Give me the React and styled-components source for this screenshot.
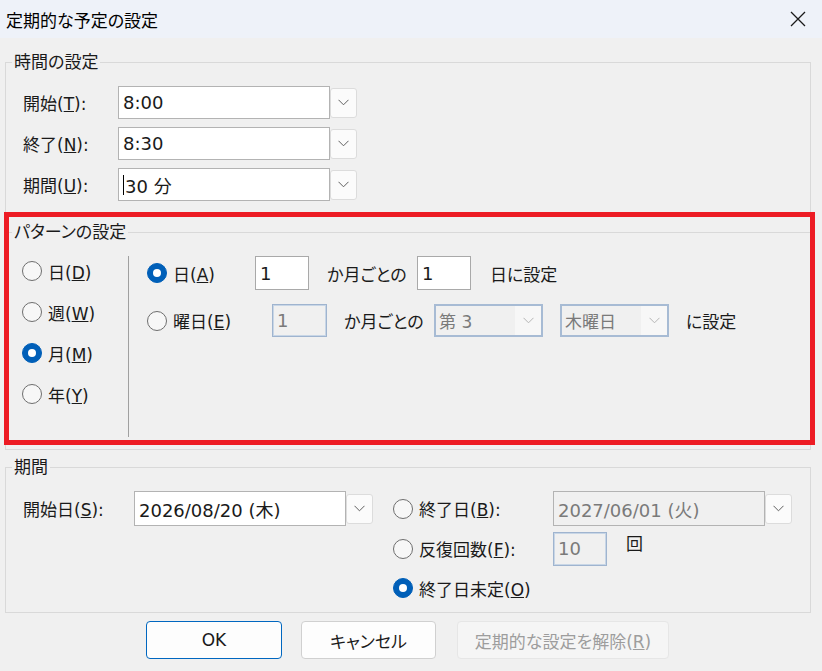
import React from "react"
import styled, { createGlobalStyle } from "styled-components"

const FONT = `"DejaVu Sans", "Noto Sans CJK JP", sans-serif`

const GlobalStyle = createGlobalStyle`
	html, body {
		margin: 0;
		padding: 0;
		background: #f0f0f0;
	}
	body {
		font-family: ${FONT};
		font-size: 17px;
		color: #1a1a1a;
		font-feature-settings: "palt";
	}
	* {
		box-sizing: border-box;
	}
`

function Chevron({ color = "#5f5f5f" }) {
	return (
		<svg width="11" height="7" viewBox="0 0 11 7">
			<polyline points="0.5,0.8 5.5,5.8 10.5,0.8" fill="none" stroke={color} strokeWidth="1" />
		</svg>
	)
}

function Radio({ checked, children, width }) {
	return (
		<RadioLabel $w={width}>
			<RadioDot $checked={checked} />
			<span>{children}</span>
		</RadioLabel>
	)
}

export default function App() {
	return (
		<>
			<GlobalStyle />
			<Dialog>
				<TitleBar>
					<span>定期的な予定の設定</span>
					<svg width="16" height="16" viewBox="0 0 16 16">
						<path d="M1 1 L15 15 M15 1 L1 15" stroke="#1a1a1a" strokeWidth="1.3" />
					</svg>
				</TitleBar>

				<Body>
					<GroupBox $top={14}>
						<Legend>時間の設定</Legend>
						<TimeRows>
							<FieldRow>
								<FieldLabel $w={95}>開始(<u>T</u>):</FieldLabel>
								<TextBox $w={212}>8:00</TextBox>
								<DropButton><Chevron /></DropButton>
							</FieldRow>
							<FieldRow>
								<FieldLabel $w={95}>終了(<u>N</u>):</FieldLabel>
								<TextBox $w={212}>8:30</TextBox>
								<DropButton><Chevron /></DropButton>
							</FieldRow>
							<FieldRow>
								<FieldLabel $w={95}>期間(<u>U</u>):</FieldLabel>
								<TextBox $w={212}>
									<Caret />
									30 分
								</TextBox>
								<DropButton><Chevron /></DropButton>
							</FieldRow>
						</TimeRows>
					</GroupBox>

					<Highlighted>
						<GroupBox $top={0}>
							<Legend>パターンの設定</Legend>
							<PatternContent>
								<FreqColumn>
									<Radio>日(<u>D</u>)</Radio>
									<Radio>週(<u>W</u>)</Radio>
									<Radio checked>月(<u>M</u>)</Radio>
									<Radio>年(<u>Y</u>)</Radio>
								</FreqColumn>
								<Divider />
								<PatternRows>
									<PatternRow $h={34}>
										<Radio checked width={108}>日(<u>A</u>)</Radio>
										<TextBox $w={54} $h={34} $plain>1</TextBox>
										<Caption $w={90} $ml={18}>か月ごとの</Caption>
										<TextBox $w={54} $h={34} $plain>1</TextBox>
										<Caption $ml={19}>日に設定</Caption>
									</PatternRow>
									<PatternRow $h={33}>
										<Radio width={125}>曜日(<u>E</u>)</Radio>
										<TextBox $w={55} $h={33} $disabled>1</TextBox>
										<Caption $w={90} $ml={17}>か月ごとの</Caption>
										<Combo $w={109}>
											<span>第 3</span>
											<ComboButton><Chevron color="#b5b5b5" /></ComboButton>
										</Combo>
										<Combo $w={109} $ml={17}>
											<span>木曜日</span>
											<ComboButton><Chevron color="#b5b5b5" /></ComboButton>
										</Combo>
										<Caption $ml={17}>に設定</Caption>
									</PatternRow>
								</PatternRows>
							</PatternContent>
						</GroupBox>
						<RedFrame />
					</Highlighted>

					<GroupBox $top={7}>
						<Legend>期間</Legend>
						<PeriodContent>
							<FieldRow $h={35}>
								<FieldLabel $w={111}>開始日(<u>S</u>):</FieldLabel>
								<TextBox $w={212} $h={35}>2026/08/20 (木)</TextBox>
								<DropButton><Chevron /></DropButton>
							</FieldRow>
							<EndColumn>
								<FieldRow $h={35}>
									<Radio width={160}>終了日(<u>B</u>):</Radio>
									<TextBox $w={212} $h={35} $grey>2027/06/01 (火)</TextBox>
									<DropButton><Chevron /></DropButton>
								</FieldRow>
								<FieldRow $h={35}>
									<Radio width={160}>反復回数(<u>F</u>):</Radio>
									<TextBox $w={54} $h={34} $disabled>10</TextBox>
									<CountUnit>回</CountUnit>
								</FieldRow>
								<FieldRow $h={34}>
									<Radio checked>終了日未定(<u>O</u>)</Radio>
								</FieldRow>
							</EndColumn>
						</PeriodContent>
					</GroupBox>

					<ButtonRow>
						<Button $w={136} $default>OK</Button>
						<Button $w={135} $ml={19}>キャンセル</Button>
						<Button $w={212} $ml={21} disabled>
							定期的な設定を解除(<u>R</u>)
						</Button>
					</ButtonRow>
				</Body>
			</Dialog>
		</>
	)
}

const Dialog = styled.div`
	width: 822px;
	height: 671px;
	display: flex;
	flex-direction: column;
	background: #f0f0f0;
	overflow: hidden;
`

const TitleBar = styled.div`
	height: 38px;
	flex: none;
	display: flex;
	align-items: center;
	justify-content: space-between;
	padding: 0 16px 0 6px;
	background: #eef2f9;
	font-size: 17px;
	color: #000;
`

const Body = styled.div`
	display: flex;
	flex-direction: column;
	padding: 0 11px 0 5px;
`

const GroupBox = styled.fieldset`
	margin: ${(p) => p.$top}px 0 0;
	padding: 0;
	min-width: 0;
	border: 1px solid #d9d9d9;
`

const Legend = styled.legend`
	margin-left: 6px;
	padding: 0 2px;
	height: 20px;
	line-height: 20px;
	font-size: 17px;
	color: #1a1a1a;
`

const TimeRows = styled.div`
	display: flex;
	flex-direction: column;
	gap: 8px;
	padding: 14px 0 13px 17px;
`

const FieldRow = styled.div`
	display: flex;
	align-items: center;
	height: ${(p) => p.$h || 33}px;
`

const FieldLabel = styled.span`
	width: ${(p) => p.$w}px;
	flex: none;
	white-space: nowrap;
`

const TextBox = styled.div`
	width: ${(p) => p.$w}px;
	height: ${(p) => p.$h || 33}px;
	flex: none;
	display: flex;
	align-items: center;
	padding: 0 4px;
	font-size: 18px;
	white-space: nowrap;
	background: ${(p) => (p.$disabled || p.$grey ? "#f0f0f0" : "#ffffff")};
	color: ${(p) => (p.$disabled || p.$grey ? "#7a7a7a" : "#1a1a1a")};
	border: 1px solid
		${(p) => (p.$disabled ? "#9fb4cf" : p.$plain ? "#a9a9a9" : "#b3b3b3")};
	box-shadow: ${(p) => (p.$disabled ? "inset 0 0 0 1px #c8d6e6" : "none")};
`

const Caret = styled.span`
	width: 1px;
	height: 20px;
	margin-right: 1px;
	background: #000;
`

const DropButton = styled.div`
	width: 27px;
	height: 30px;
	flex: none;
	display: flex;
	align-items: center;
	justify-content: center;
	background: #fbfbfb;
	border: 1px solid #dcdcdc;
	border-radius: 3px;
`

const Highlighted = styled.div`
	position: relative;
	margin-top: 7px;
`

const RedFrame = styled.div`
	position: absolute;
	top: -10px;
	left: -1px;
	right: -4px;
	bottom: 5px;
	border: 5px solid #ed1c24;
	pointer-events: none;
`

const PatternContent = styled.div`
	display: flex;
	padding: 14px 0 12px 16px;
`

const FreqColumn = styled.div`
	width: 106px;
	flex: none;
	display: flex;
	flex-direction: column;
	gap: 11px;
`

const Divider = styled.div`
	width: 1px;
	height: 181px;
	background: #a0a0a0;
`

const PatternRows = styled.div`
	display: flex;
	flex-direction: column;
	gap: 14px;
	padding-left: 18px;
`

const PatternRow = styled.div`
	display: flex;
	align-items: center;
	height: ${(p) => p.$h}px;
`

const Caption = styled.span`
	width: ${(p) => (p.$w ? `${p.$w}px` : "auto")};
	flex: none;
	margin-left: ${(p) => p.$ml || 0}px;
	white-space: nowrap;
`

const RadioLabel = styled.label`
	width: ${(p) => (p.$w ? `${p.$w}px` : "auto")};
	height: 30px;
	flex: none;
	display: flex;
	align-items: center;
	gap: 6px;
	white-space: nowrap;
`

const RadioDot = styled.span`
	width: 20px;
	height: 20px;
	flex: none;
	border-radius: 50%;
	background: ${(p) => (p.$checked ? "#005fb8" : "#f7f7f7")};
	border: 1px solid ${(p) => (p.$checked ? "#005fb8" : "#6e6e6e")};
	display: flex;
	align-items: center;
	justify-content: center;

	&::after {
		content: "";
		display: ${(p) => (p.$checked ? "block" : "none")};
		width: 8px;
		height: 8px;
		border-radius: 50%;
		background: #ffffff;
	}
`

const Combo = styled.div`
	width: ${(p) => p.$w}px;
	height: 33px;
	flex: none;
	margin-left: ${(p) => p.$ml || 0}px;
	display: flex;
	align-items: stretch;
	justify-content: space-between;
	border: 2px solid #a7bbd4;
	background: #f0f0f0;
	color: #7a7a7a;

	span {
		display: flex;
		align-items: center;
		padding-left: 3px;
		white-space: nowrap;
	}
`

const ComboButton = styled.div`
	width: 26px;
	display: flex;
	align-items: center;
	justify-content: center;
	background: #f7f7f7;
`

const PeriodContent = styled.div`
	display: flex;
	align-items: flex-start;
	padding: 14px 0 7px 17px;
`

const EndColumn = styled.div`
	display: flex;
	flex-direction: column;
	gap: 5px;
	margin-left: 20px;
`

const CountUnit = styled.span`
	align-self: flex-start;
	line-height: 26px;
	margin-left: 19px;
`

const ButtonRow = styled.div`
	display: flex;
	margin-top: 8px;
	padding-left: 141px;
`

const Button = styled.button`
	width: ${(p) => p.$w}px;
	height: 38px;
	margin-left: ${(p) => p.$ml || 0}px;
	font-family: ${FONT};
	font-size: 17px;
	font-feature-settings: "palt";
	color: #1a1a1a;
	background: #fdfdfd;
	border: 1px solid ${(p) => (p.$default ? "#0067c0" : "#d0d0d0")};
	border-radius: 4px;

	&:disabled {
		background: #f5f5f5;
		border-color: #e6e6e6;
		color: #9d9d9d;
	}
`
